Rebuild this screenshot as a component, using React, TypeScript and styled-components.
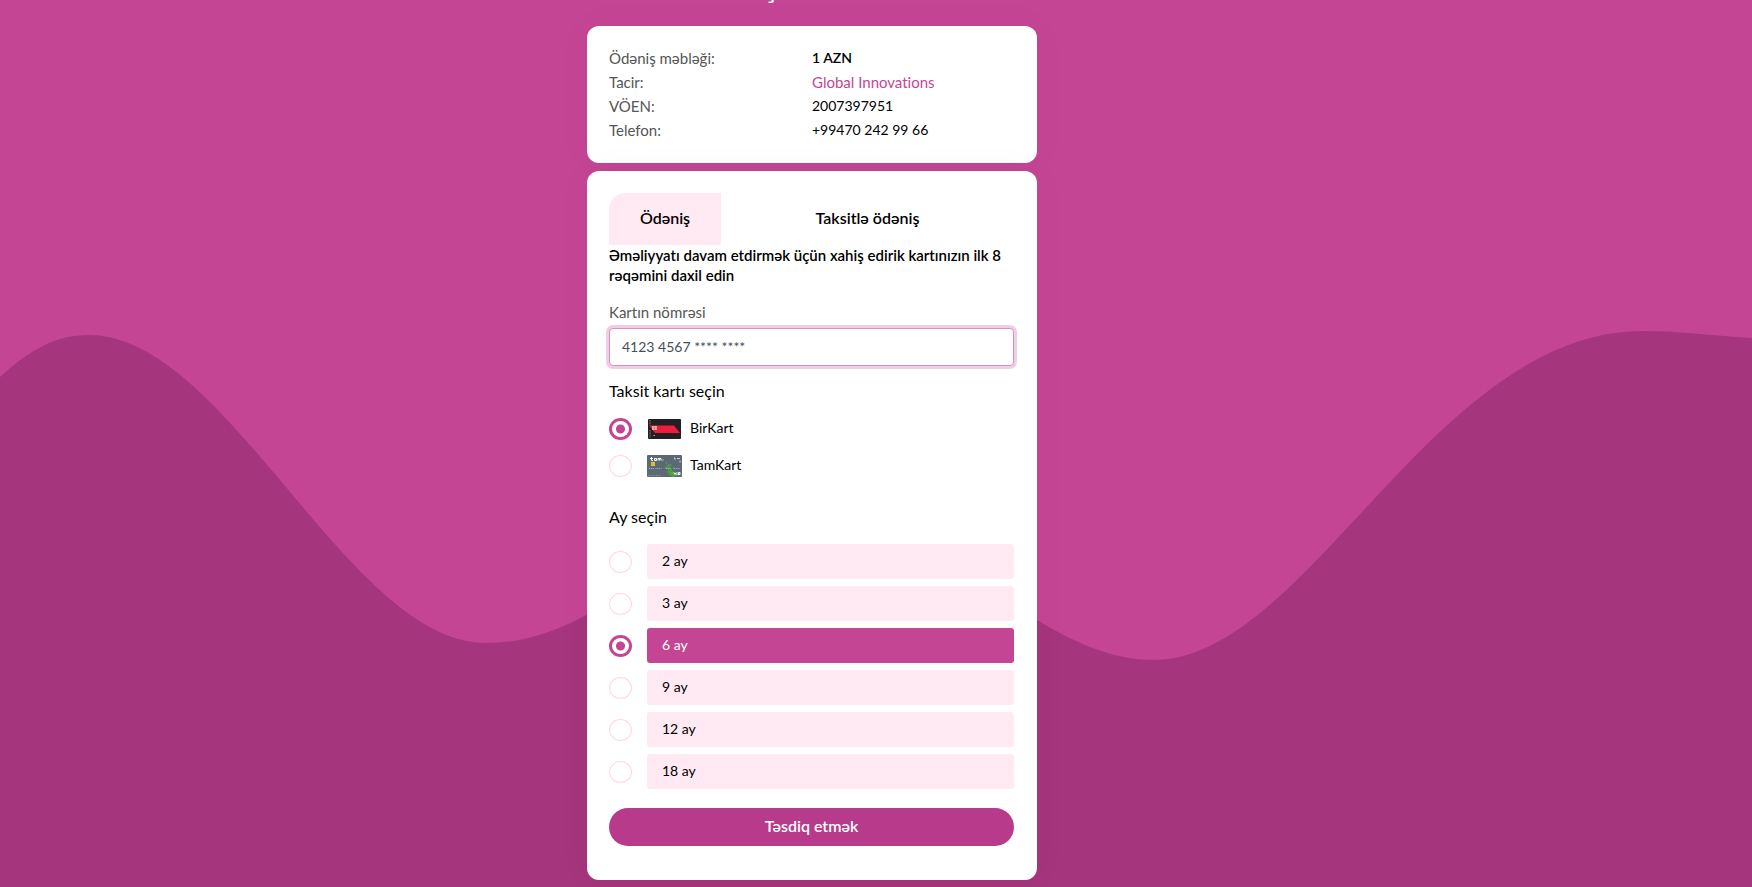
import React, { useState } from "react";
import styled, { createGlobalStyle } from "styled-components";

const PINK = "#c54595";
const DEEP = "#a5357c";
const BLUSH = "#ffeaf3";

const GlobalStyle = createGlobalStyle`
  *, *::before, *::after { box-sizing: border-box; }
  body {
    margin: 0;
    background: ${DEEP};
    color: #000;
    font-family: Lato, "Open Sans", sans-serif;
    font-size: 14px;
    font-variant-ligatures: none;
    line-height: 20px;
  }
  button, input { font: inherit; }
`;

const Page = styled.div`
  position: relative;
  min-height: 100vh;
  padding: 0 128px 7px 0;
  overflow: hidden;
`;

const Backdrop = styled.svg`
  position: absolute;
  inset: 0;
  width: 100%;
  height: 100%;
`;

const Column = styled.main`
  position: relative;
  display: flex;
  flex-direction: column;
  gap: 8px;
  width: 100%;
  max-width: 450px;
  margin: 0 auto;
`;

const TitleClip = styled.header`
  display: flex;
  flex-direction: column;
  justify-content: flex-end;
  align-items: center;
  height: 4px;
  margin-bottom: 14px;
`;

const Title = styled.h1`
  margin: 0;
  color: #fff;
  font-size: 30px;
  font-weight: 400;
  line-height: 36px;
  white-space: nowrap;
`;

const Card = styled.section`
  padding: 20px 22px;
  background: #fff;
  border-radius: 12px;
  box-shadow: 0 0 40px rgba(0, 0, 0, 0.03);
`;

const SummaryCard = styled(Card)`
  padding-bottom: 21px;
`;

const FormCard = styled(Card)`
  padding: 22px 23px 34px 22px;
`;

const Details = styled.dl`
  display: grid;
  grid-template-columns: 1fr 1fr;
  grid-auto-rows: 24px;
  align-items: center;
  margin: 0;
`;

const Term = styled.dt`
  color: #555;
  font-size: 15px;
`;

const Value = styled.dd<{ $strong?: boolean }>`
  margin: 0;
  font-weight: ${(p) => (p.$strong ? 600 : 400)};
`;

const Merchant = styled(Value)`
  color: ${PINK};
  font-size: 15px;
`;

const Tabs = styled.div`
  display: flex;
`;

const Tab = styled.button<{ $active?: boolean; $grow?: boolean }>`
  flex: ${(p) => (p.$grow ? "1" : "0 0 112px")};
  height: 52px;
  padding: 0 0 2px;
  border: 0;
  border-radius: ${(p) => (p.$grow ? "0 16px 0 0" : "16px 0 0 0")};
  background: ${(p) => (p.$active ? BLUSH : "#fff")};
  color: #000;
  font-size: 16px;
  font-weight: 600;
`;

const Notice = styled.p`
  margin: 0 0 17px;
  font-size: 15px;
  font-weight: 600;
`;

const FieldLabel = styled.label`
  display: block;
  margin-bottom: 6px;
  color: #555;
  font-size: 15px;
`;

const CardInput = styled.input`
  display: block;
  width: 100%;
  height: 38px;
  padding: 0 12px 2px;
  border: 1px solid #db8fc0;
  border-radius: 4px;
  outline: 0;
  background: #fff;
  color: #495057;
  box-shadow: 0 0 0 3px #efcfe4;
`;

const Group = styled.fieldset`
  min-width: 0;
  margin: 0;
  padding: 0;
  border: 0;
`;

const Legend = styled.legend`
  padding: 0;
  margin-bottom: 15px;
  font-size: 16px;
  line-height: 24px;
`;

const Options = styled.div<{ $gap: number }>`
  display: flex;
  flex-direction: column;
  gap: ${(p) => p.$gap}px;
`;

const Option = styled.label`
  display: flex;
  align-items: center;
`;

const OptionName = styled.span`
  padding-bottom: 2px;
`;

const Radio = styled.input`
  appearance: none;
  flex: none;
  width: 23px;
  height: 22px;
  margin: 0 15px 0 0;
  border: 1px solid #ffd6e8;
  border-radius: 50%;
  background: #fff;
  &:checked {
    border: 3px solid ${PINK};
    background: radial-gradient(circle, ${PINK} 4px, #fff 5px);
  }
`;

const CardArt = styled.svg`
  flex: none;
  width: 35px;
  height: 22px;
  margin-right: 8px;
`;

const MonthBar = styled.span<{ $active: boolean }>`
  flex: 1;
  padding: 0 15px 2px;
  border-radius: 3px;
  background: ${(p) => (p.$active ? PINK : BLUSH)};
  color: ${(p) => (p.$active ? "#fff" : "#000")};
  line-height: 33px;
`;

const Submit = styled.button`
  display: block;
  width: 100%;
  height: 38px;
  margin-top: 19px;
  padding: 0 0 2px;
  border: 0;
  border-radius: 19px;
  background: #b83a8a;
  color: #fff;
  font-size: 16px;
  font-weight: 600;
`;

const InstallmentCards = styled(Group)`
  margin-top: 13px;
`;

const InstallmentMonths = styled(Group)`
  margin-top: 28px;
`;

const WAVE = [
  "M0 377",
  "C30 350 55 335 89 335",
  "C227 335 348 643 486 643",
  "C525 643 560 630 590 613",
  "C740 530 900 530 1037 620",
  "C1073 642 1113 660 1153 660",
  "C1308 660 1433 331 1643 331",
  "C1680 331 1716 336 1752 338",
  "V887H0Z",
].join("");

function BirKartArt() {
  return (
    <CardArt viewBox="0 0 35 22" aria-hidden="true">
      <rect x="1" y="1" width="33" height="20" rx="1" fill="#231f20" />
      <path d="M2 7.500h25l6 7.500H8z" fill="#ee1c3f" />
      <rect x="5" y="8" width="5" height="4" fill="#e3b0b4" />
      <path d="M5 10h5M7.500 8v4" stroke="#b9797f" strokeWidth=".5" />
      <path d="M3 2v5M3 12v8" stroke="#8d8a8b" strokeWidth="1" strokeDasharray="1 .6" />
      <path d="M6.500 17.500h1.500" stroke="#aaa" />
    </CardArt>
  );
}

function TamKartArt() {
  return (
    <CardArt viewBox="0 0 35 22" aria-hidden="true">
      <rect width="35" height="22" rx="1" fill="#5c6a75" />
      <path d="M20 10l2-1 1 3 2 2 1 3 2 2 2 2-1 1h-4l-3-2-2-3 1-2-2-3z" fill="#4c9a45" />
      <path d="M19 8h1M23 10h1M26 13h1M18 13h1M24 18h3M31 20h1" stroke="#6abf4b" />
      <path d="M4.500 2v3.500h1.500M3 3.500h3M7.500 3.500h2v2h-2zM11 5.500v-2h1.500v2M12.500 3.500H14v2M15.500 5h1" stroke="#fff" fill="none" />
      <rect x="4" y="7" width="4" height="4" fill="#e3c437" />
      <path d="M4 9h4" stroke="#b99b22" strokeWidth=".5" />
      <path d="M2 13.500h5M8.500 13.500h6M19 13.500h5M27 13.500h6" stroke="#a9b4bb" strokeWidth="1" strokeDasharray="1 .8" />
      <path d="M27.500 2.500v1.500h1.500M30 3.500h3M33 5.500v2" stroke="#c9d2d8" fill="none" />
      <path d="M27 17.500l1 2 1-2M30 17.500v2.500M31.500 17.500h1.500v2h-1.500z" stroke="#fff" fill="none" />
      <path d="M1 20.500h13" stroke="#95a1a9" strokeWidth=".7" strokeDasharray="1 .6" />
    </CardArt>
  );
}

const CARDS = [
  { id: "BirKart", art: <BirKartArt /> },
  { id: "TamKart", art: <TamKartArt /> },
];
const MONTHS = [2, 3, 6, 9, 12, 18];

export default function App() {
  const [card, setCard] = useState("BirKart");
  const [months, setMonths] = useState(6);

  return (
    <>
      <GlobalStyle />
      <Page>
        <Backdrop viewBox="0 0 1752 887" preserveAspectRatio="none" aria-hidden="true">
          <rect width="1752" height="887" fill={PINK} />
          <path d={WAVE} fill={DEEP} />
        </Backdrop>
        <Column>
          <TitleClip>
            <Title>Ödəniş məlumatları</Title>
          </TitleClip>

          <SummaryCard>
            <Details>
              <Term>Ödəniş məbləği:</Term>
              <Value $strong>1 AZN</Value>
              <Term>Tacir:</Term>
              <Merchant>Global Innovations</Merchant>
              <Term>VÖEN:</Term>
              <Value>2007397951</Value>
              <Term>Telefon:</Term>
              <Value>+99470 242 99 66</Value>
            </Details>
          </SummaryCard>

          <FormCard>
            <Tabs role="tablist">
              <Tab type="button" role="tab" aria-selected="true" $active>Ödəniş</Tab>
              <Tab type="button" role="tab" aria-selected="false" $grow>Taksitlə ödəniş</Tab>
            </Tabs>
            <Notice>Əməliyyatı davam etdirmək üçün xahiş edirik kartınızın ilk 8 rəqəmini daxil edin</Notice>
            <FieldLabel htmlFor="card-number">Kartın nömrəsi</FieldLabel>
            <CardInput id="card-number" inputMode="numeric" defaultValue="4123 4567 **** ****" />

            <InstallmentCards>
              <Legend>Taksit kartı seçin</Legend>
              <Options $gap={15}>
                {CARDS.map((c) => (
                  <Option key={c.id}>
                    <Radio type="radio" name="card" checked={card === c.id} onChange={() => setCard(c.id)} />
                    {c.art}
                    <OptionName>{c.id}</OptionName>
                  </Option>
                ))}
              </Options>
            </InstallmentCards>

            <InstallmentMonths>
              <Legend>Ay seçin</Legend>
              <Options $gap={7}>
                {MONTHS.map((m) => (
                  <Option key={m}>
                    <Radio type="radio" name="months" checked={months === m} onChange={() => setMonths(m)} />
                    <MonthBar $active={months === m}>{m} ay</MonthBar>
                  </Option>
                ))}
              </Options>
            </InstallmentMonths>

            <Submit type="button">Təsdiq etmək</Submit>
          </FormCard>
        </Column>
      </Page>
    </>
  );
}
